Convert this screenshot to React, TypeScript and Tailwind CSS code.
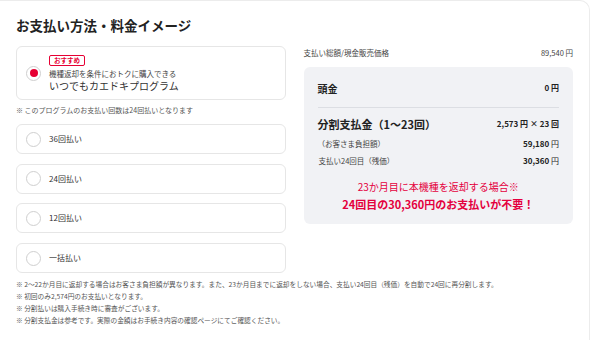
import React from "react";

const Radio = ({ checked = false }: { checked?: boolean }) => (
  <div className="w-[15px] h-[15px] rounded-full border border-[#cfcfcf] bg-white flex items-center justify-center shrink-0">
    {checked && <div className="w-[8px] h-[8px] rounded-full bg-[#e60033]" />}
  </div>
);

const Option = ({ label }: { label: string }) => (
  <div className="h-[30px] rounded-[6px] border border-[#e6e6e6] bg-white flex items-center pl-[9px] gap-[8px]">
    <Radio />
    <span className="text-[8px] leading-[12px] text-[#333]">{label}</span>
  </div>
);

export default function App() {
  const notes = [
    "※ 2〜22か月目に返却する場合はお客さま負担額が異なります。また、23か月目までに返却をしない場合、支払い24回目（残価）を自動で24回に再分割します。",
    "※ 初回のみ2,574円のお支払いとなります。",
    "※ 分割払いは購入手続き時に審査がございます。",
    "※ 分割支払金は参考です。実際の金額はお手続き内容の確認ページにてご確認ください。",
  ];
  return (
    <div className="w-[590px] h-[340px] bg-white overflow-hidden font-['Noto_Sans_CJK_JP','Noto_Sans',sans-serif] text-[#333]">
      <div className="h-[340px] border-t border-r border-[#ececec] rounded-tr-[10px] px-[16px] pt-[14px]">
        <h1 className="text-[13.5px] leading-[20px] font-bold text-[#222]">お支払い方法・料金イメージ</h1>
        <div className="flex gap-[18px] mt-[11px]">
          <div className="w-[271px] flex flex-col">
            <div className="h-[54px] rounded-[6px] border border-[#e6e6e6] bg-white flex items-center pl-[9px] gap-[8px]">
              <Radio checked />
              <div className="flex flex-col pt-[2px]">
                <div className="self-start border border-[#e60033] rounded-[2px] px-[4px] h-[11px] flex items-center text-[6.5px] font-bold text-[#e60033] leading-none">おすすめ</div>
                <div className="text-[7.5px] leading-[11px] mt-[2px] text-[#444]">機種返却を条件におトクに購入できる</div>
                <div className="text-[10px] leading-[14px] text-[#333]">いつでもカエドキプログラム</div>
              </div>
            </div>
            <div className="text-[7px] leading-[12px] mt-[4px] text-[#555]">※ このプログラムのお支払い回数は24回払いとなります</div>
            <div className="flex flex-col gap-[9.7px] mt-[8px]">
              <Option label="36回払い" />
              <Option label="24回払い" />
              <Option label="12回払い" />
              <Option label="一括払い" />
            </div>
          </div>
          <div className="w-[271px] flex flex-col">
            <div className="flex justify-between items-center h-[12px] mt-[1px] text-[7.5px] text-[#444]">
              <span>支払い総額/現金販売価格</span>
              <span>89,540 円</span>
            </div>
            <div className="mt-[8px] rounded-[6px] bg-[#f1f2f5] px-[14px] pt-[13px] pb-[13px] flex flex-col">
              <div className="flex justify-between items-center h-[16px]">
                <span className="text-[10px] font-bold text-[#222]">頭金</span>
                <span className="text-[8px] font-bold text-[#222]">0 円</span>
              </div>
              <div className="h-px bg-[#dcdee3] mt-[11px]" />
              <div className="flex justify-between items-center h-[16px] mt-[8px]">
                <span className="text-[11px] font-bold text-[#222]">分割支払金（1〜23回）</span>
                <span className="text-[8px] font-bold text-[#222]">2,573 円 × 23 回</span>
              </div>
              <div className="flex justify-between items-center h-[12px] mt-[6px]">
                <span className="text-[7.5px] text-[#444]">（お客さま負担額）</span>
                <span className="text-[8px] font-bold text-[#222]">59,180 <span className="font-normal">円</span></span>
              </div>
              <div className="flex justify-between items-center h-[12px] mt-[5px]">
                <span className="text-[7.5px] text-[#444] pl-[1px]">支払い24回目（残価）</span>
                <span className="text-[8px] font-bold text-[#222]">30,360 <span className="font-normal">円</span></span>
              </div>
              <div className="text-center text-[10px] leading-[14px] mt-[13px] text-[#e4003d]">23か月目に本機種を返却する場合※</div>
              <div className="text-center text-[11px] leading-[14px] mt-[3px] font-bold text-[#e4003d]">24回目の30,360円のお支払いが不要！</div>
            </div>
          </div>
        </div>
        <div className="mt-[5px] flex flex-col">
          {notes.map((n) => (
            <div key={n} className="text-[6.7px] leading-[12px] text-[#555] whitespace-nowrap">{n}</div>
          ))}
        </div>
      </div>
    </div>
  );
}
